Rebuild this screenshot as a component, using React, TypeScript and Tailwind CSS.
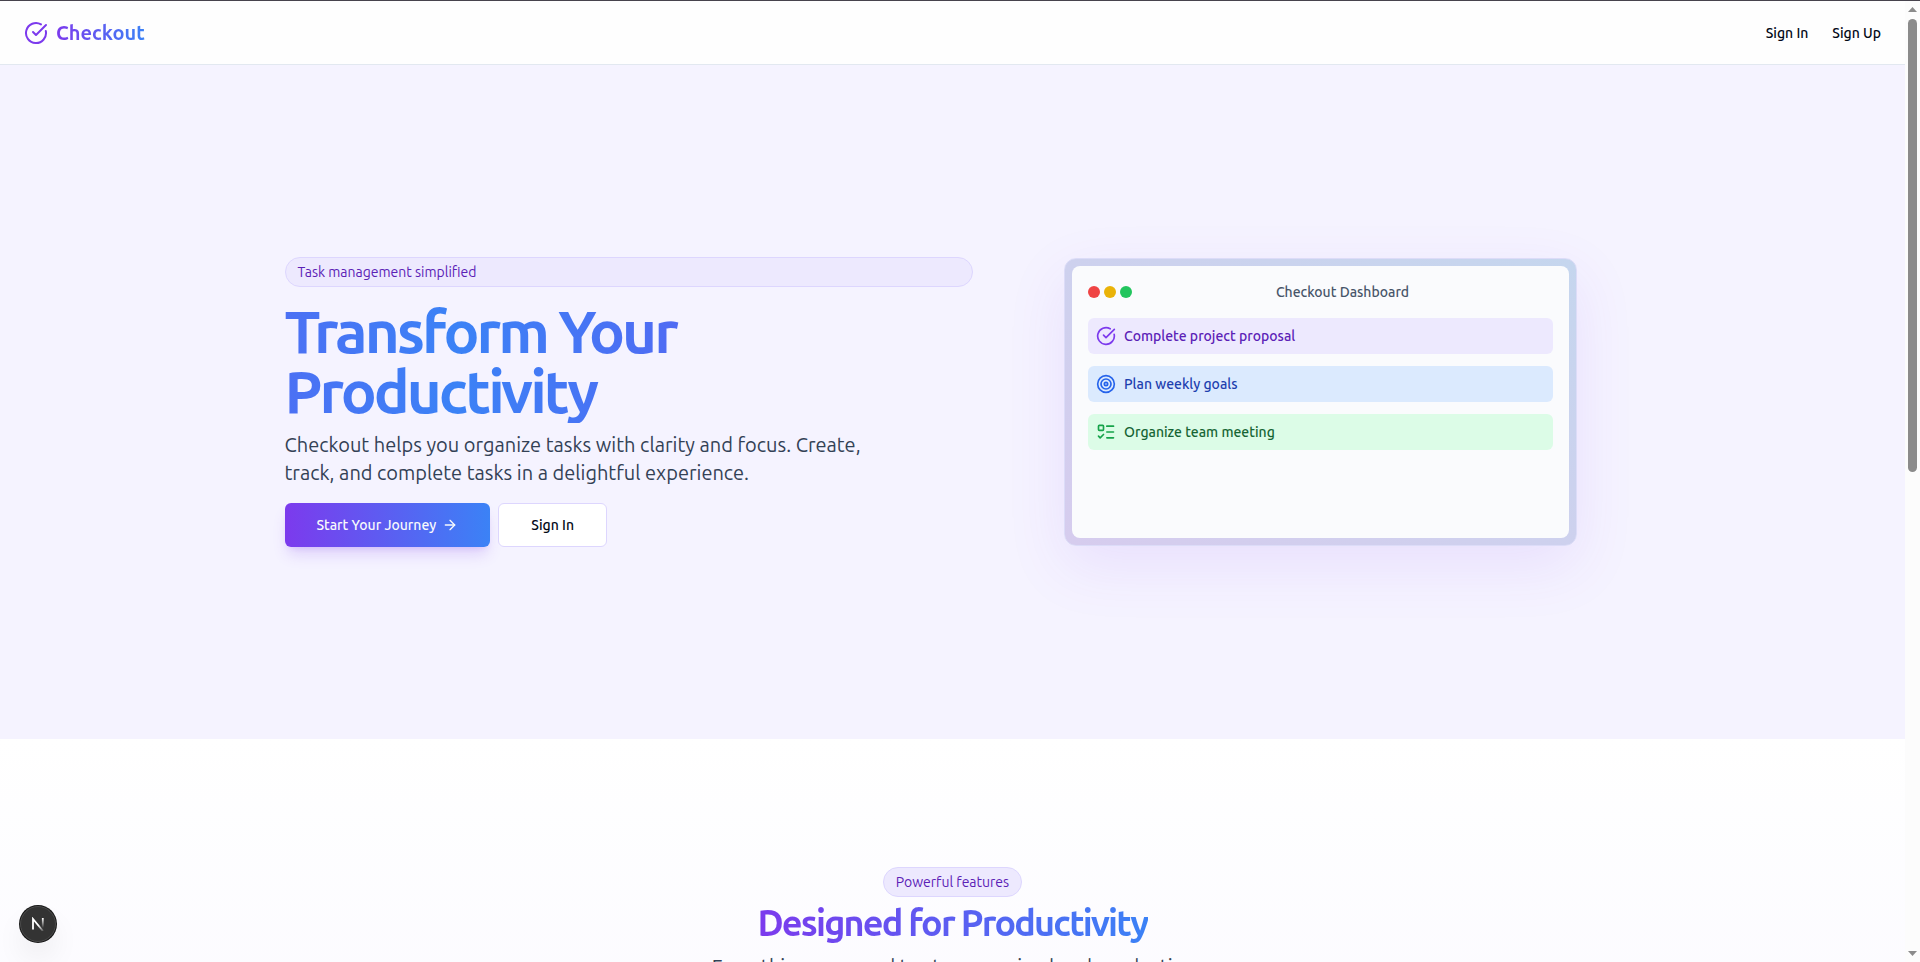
import type { ReactNode } from "react";
import { ArrowRight, CircleCheckBig, ListTodo, Target } from "lucide-react";

const tasks = [
  {
    label: "Complete project proposal",
    Icon: CircleCheckBig,
    row: "bg-[#ede9fe] text-[#5b21b6]",
    icon: "text-[#7c3aed]",
  },
  {
    label: "Plan weekly goals",
    Icon: Target,
    row: "bg-[#dbeafe] text-[#1e40af]",
    icon: "text-[#2563eb]",
  },
  {
    label: "Organize team meeting",
    Icon: ListTodo,
    row: "bg-[#dcfce7] text-[#166534]",
    icon: "text-[#16a34a]",
  },
];

function Badge({ children }: { children: ReactNode }) {
  return (
    <div className="rounded-full border border-[#ddd6fe] bg-[#ede9fe] px-3 py-1 text-sm text-[#5b21b6]">
      {children}
    </div>
  );
}

function Header() {
  return (
    <header className="flex h-16 shrink-0 items-center justify-between border-b border-[#e2e8f0] bg-[#fefefe] px-6">
      <a href="#" className="flex items-center gap-2">
        <CircleCheckBig className="size-6 text-[#7c3aed]" />
        <span className="bg-linear-to-r/srgb from-[#7c3aed] to-[#3b82f6] bg-clip-text text-xl font-bold text-transparent">
          Checkout
        </span>
      </a>
      <nav className="flex gap-6 text-sm font-medium text-[#020817]">
        <a href="#signin">Sign In</a>
        <a href="#signup">Sign Up</a>
      </nav>
    </header>
  );
}

function DashboardPreview() {
  return (
    <div className="mx-auto aspect-video w-full max-w-[513px] rounded-xl border border-[#dcdcf8] bg-linear-to-tr/srgb from-[#d6ccee] to-[#c5d6ee] p-[7px] shadow-[0_20px_60px_rgba(124,58,237,0.1)]">
      <div className="flex h-full flex-col gap-4 rounded-lg bg-[#fafbfd] p-4">
        <div className="flex items-center">
          <div className="flex gap-1">
            <span className="size-3 rounded-full bg-[#ef4444]" />
            <span className="size-3 rounded-full bg-[#eab308]" />
            <span className="size-3 rounded-full bg-[#22c55e]" />
          </div>
          <p className="flex-1 text-center text-sm font-medium text-[#475569]">Checkout Dashboard</p>
        </div>
        <ul className="flex flex-col gap-3">
          {tasks.map(({ label, Icon, row, icon }) => (
            <li key={label} className={`flex items-center gap-2 rounded-md p-2 text-sm font-medium ${row}`}>
              <Icon className={`size-5 ${icon}`} />
              {label}
            </li>
          ))}
        </ul>
      </div>
    </div>
  );
}

function Hero() {
  return (
    <section className="bg-[#f5f3ff] py-48">
      <div className="mx-auto grid max-w-[1400px] items-center gap-12 px-8 lg:grid-cols-[1fr_600px]">
        <div className="flex flex-col gap-4">
          <Badge>Task management simplified</Badge>
          <div className="flex flex-col gap-2">
            <h1 className="-mt-0.5 bg-linear-to-r/srgb from-[#7c3aed] via-[#3b82f6] to-[#7c3aed] bg-[length:200%_100%] bg-[position:75%_50%] bg-clip-text pb-0.5 text-6xl leading-none font-bold tracking-tighter text-transparent">
              Transform Your Productivity
            </h1>
            <p className="max-w-[600px] text-xl text-[#334155]">
              Checkout helps you organize tasks with clarity and focus. Create, track, and complete tasks in a
              delightful experience.
            </p>
          </div>
          <div className="flex gap-2">
            <a
              href="#signup"
              className="flex h-11 items-center gap-1.5 rounded-md bg-linear-to-r/srgb from-[#7c3aed] to-[#3b82f6] px-8 text-sm font-medium text-[#f8fafc] shadow-lg shadow-[#7c3aed]/20"
            >
              Start Your Journey
              <ArrowRight className="size-4" />
            </a>
            <a
              href="#signin"
              className="flex h-11 items-center rounded-md border border-[#ddd6fe] bg-white px-8 text-sm font-medium text-[#020817]"
            >
              Sign In
            </a>
          </div>
        </div>
        <DashboardPreview />
      </div>
    </section>
  );
}

function Features() {
  return (
    <section className="bg-linear-to-b/srgb from-white to-[#f5f3ff] py-32">
      <div className="mx-auto flex max-w-[1400px] flex-col items-center gap-2 px-8 pb-96 text-center">
        <Badge>Powerful features</Badge>
        <h2 className="-mt-0.5 bg-linear-to-r/srgb from-[#7c3aed] to-[#3b82f6] bg-clip-text pb-0.5 text-4xl font-bold tracking-tighter text-transparent">
          Designed for Productivity
        </h2>
        <p className="text-xl text-[#334155]">Everything you need to stay organized and productive</p>
      </div>
    </section>
  );
}

function Scrollbar() {
  return (
    <div aria-hidden="true" className="flex w-[15px] shrink-0 flex-col items-center bg-[#fcfcfc] py-1.5">
      <svg viewBox="0 0 9 5" className="h-[5px] w-[9px] fill-[#8b8b8b]">
        <path d="M4.5 0 9 5H0z" />
      </svg>
      <div className="flex min-h-0 flex-1 flex-col py-[7px]">
        <div className="h-[49%] w-[9px] rounded-full bg-[#8b8b8b]" />
      </div>
      <svg viewBox="0 0 9 5" className="h-[5px] w-[9px] fill-[#8b8b8b]">
        <path d="M0 0h9L4.5 5z" />
      </svg>
    </div>
  );
}

function DevToolsButton() {
  return (
    <button
      type="button"
      aria-label="Open developer tools"
      className="fixed bottom-5 left-5 flex size-9 items-center justify-center rounded-full border border-[#4a4a4a] bg-[#333333] shadow-[0_16px_32px_-8px_rgba(0,0,0,0.2)] ring-1 ring-[#171717]"
    >
      <svg viewBox="0 0 14 14" fill="none" strokeWidth="1.8" className="size-3.5">
        <defs>
          <linearGradient id="stem" x1="0" y1="1" x2="0" y2="11" gradientUnits="userSpaceOnUse">
            <stop stopColor="#fff" />
            <stop offset="1" stopColor="#fff" stopOpacity="0" />
          </linearGradient>
          <linearGradient id="slash" x1="8" y1="8" x2="13" y2="14" gradientUnits="userSpaceOnUse">
            <stop stopColor="#fff" />
            <stop offset="1" stopColor="#fff" stopOpacity="0.1" />
          </linearGradient>
        </defs>
        <path d="M2 12.5V2L12 14" stroke="url(#slash)" />
        <path d="M11.8 1V11" stroke="url(#stem)" />
      </svg>
    </button>
  );
}

export default function App() {
  return (
    <div className="flex h-screen overflow-hidden border-t border-[#47434d] bg-white font-['Ubuntu','Noto_Sans',sans-serif] antialiased">
      <div className="min-w-0 flex-1 overflow-hidden">
        <Header />
        <main>
          <Hero />
          <Features />
        </main>
      </div>
      <Scrollbar />
      <DevToolsButton />
    </div>
  );
}
